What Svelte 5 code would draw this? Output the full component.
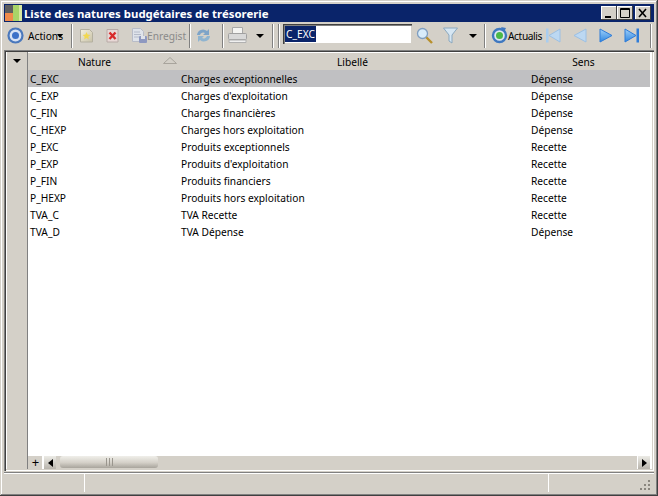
<script>
  var rows = [
    ['C_EXC', 'Charges exceptionnelles', 'Dépense'],
    ['C_EXP', "Charges d'exploitation", 'Dépense'],
    ['C_FIN', 'Charges financières', 'Dépense'],
    ['C_HEXP', 'Charges hors exploitation', 'Dépense'],
    ['P_EXC', 'Produits exceptionnels', 'Recette'],
    ['P_EXP', "Produits d'exploitation", 'Recette'],
    ['P_FIN', 'Produits financiers', 'Recette'],
    ['P_HEXP', 'Produits hors exploitation', 'Recette'],
    ['TVA_C', 'TVA Recette', 'Recette'],
    ['TVA_D', 'TVA Dépense', 'Dépense']
  ];
</script>

<div class="window">
  <div class="titlebar">
    <svg class="app-icon" width="20" height="18" viewBox="0 0 20 18">
      <rect x="1" y="1" width="8" height="8" fill="#5e5e5e"/>
      <rect x="9" y="1" width="9" height="16" fill="#a8d468"/>
      <rect x="1" y="9" width="8" height="8" fill="#f08a4a"/>
      <rect x="15" y="1" width="3" height="16" fill="#d8e8a0"/>
    </svg>
    <span class="title">Liste des natures budgétaires de trésorerie</span>
    <div class="win-btns">
      <button class="win-btn" aria-label="min"><svg width="16" height="14"><rect x="4" y="10" width="6" height="2" fill="#000"/></svg></button>
      <button class="win-btn" aria-label="max"><svg width="16" height="14"><path d="M3.500 2.500h9v9h-9z M3 3.500h10" fill="none" stroke="#000"/></svg></button>
      <button class="win-btn close" aria-label="close"><svg width="16" height="14"><path d="M4 3l7 8M11 3l-7 8" stroke="#000" stroke-width="1.600"/></svg></button>
    </div>
  </div>

  <div class="toolbar">
    <svg class="ic ic-actions" width="17" height="17" viewBox="0 0 17 17">
      <circle cx="8.500" cy="8.500" r="7" fill="#d8e2f4" stroke="#4a78bc" stroke-width="2.200"/>
      <circle cx="8.500" cy="8.500" r="3.500" fill="#3c70c8"/>
    </svg>
    <span class="lbl lbl-actions">Actions</span>
    <svg class="mini" width="6" height="4"><path d="M0 0h6L3 4z" fill="#000"/></svg>
    <i class="sep sep-a"></i>

    <svg class="ic ic-new" width="15" height="15" viewBox="0 0 15 15">
      <defs><linearGradient id="dc" x1="0" y1="0" x2="1" y2="1"><stop offset="0" stop-color="#f4f0e0"/><stop offset="1" stop-color="#c8c2a8"/></linearGradient></defs>
      <path d="M1.500 1.500h9l3 3v9.500h-12z" fill="url(#dc)" stroke="#b4b0a0"/>
      <path d="M7.500 4l1.100 2.600 2.800.3-2.100 1.900.6 2.800-2.400-1.500-2.400 1.500.6-2.800-2.100-1.900 2.800-.3z" fill="#f2d84e"/>
    </svg>
    <svg class="ic ic-del" width="15" height="15" viewBox="0 0 15 15">
      <path d="M2 1.500h11v12.500H2z" fill="#e8d8d6" stroke="#b8aaa6"/>
      <path d="M4.500 4.500l6 6.500M10.500 4.500l-6 6.500" stroke="#d82a2a" stroke-width="2.400"/>
    </svg>
    <svg class="ic ic-save" width="17" height="17" viewBox="0 0 17 17">
      <path d="M1.500 1.500h8l3 3v10h-11z" fill="#dfe3ea" stroke="#b8bcc8"/>
      <path d="M3 5h6M3 7.500h7M3 10h5" stroke="#b4bac8"/>
      <rect x="8" y="9" width="8" height="7" rx="1" fill="#8e98c0"/>
      <rect x="10" y="9" width="4" height="3" fill="#dfe3ea"/>
    </svg>
    <span class="lbl lbl-save">Enregist</span>
    <i class="sep sep-b"></i>

    <svg class="ic ic-sync" width="17" height="17" viewBox="0 0 17 17">
      <path d="M2 8a6 6 0 0 1 10-4l2-2v6H8l2-2a3.500 3.500 0 0 0-5 2z" fill="#7ea4c8"/>
      <path d="M15 9a6 6 0 0 1-10 4l-2 2V9h6l-2 2a3.500 3.500 0 0 0 5-2z" fill="#8fb4d0"/>
    </svg>
    <i class="sep sep-c"></i>

    <svg class="ic ic-print" width="19" height="17" viewBox="0 0 19 17">
      <path d="M4.500.5h10v6h-10z" fill="#f4f4f2" stroke="#a8a8a8"/>
      <rect x=".5" y="6.500" width="18" height="6" rx="1" fill="#d8d8d8" stroke="#a0a0a0"/>
      <path d="M1 13h17v2.500H1z" fill="#f0f0f0" stroke="#b0b0b0"/>
    </svg>
    <svg class="arrow arrow-print" width="8" height="4"><path d="M0 0h8L4 4z" fill="#000"/></svg>
    <i class="sep sep-d"></i>
    <i class="sep sep-e"></i>

    <div class="search"><span class="sel">C_EXC</span></div>

    <svg class="ic ic-glass" width="17" height="17" viewBox="0 0 17 17">
      <path d="M10 10l6 6" stroke="#b8902c" stroke-width="2.400"/>
      <circle cx="6.500" cy="6.500" r="5" fill="#d8ecfa" stroke="#7f9ec0" stroke-width="1.300"/>
    </svg>
    <svg class="ic ic-funnel" width="15" height="17" viewBox="0 0 15 17">
      <path d="M.5 1h14L9 8v8l-3-2V8z" fill="#d6e6f2" stroke="#8aa8c0"/>
    </svg>
    <svg class="arrow arrow-filter" width="8" height="4"><path d="M0 0h8L4 4z" fill="#000"/></svg>
    <i class="sep sep-f"></i>

    <svg class="ic ic-refresh" width="17" height="17" viewBox="0 0 17 17">
      <circle cx="8.500" cy="8.500" r="6.500" fill="#dfe8f2" stroke="#3f78c0" stroke-width="2.400"/>
      <circle cx="8.500" cy="8.500" r="3.500" fill="#4cb848"/>
      <path d="M10 0l5 1-2 4z" fill="#3f78c0"/>
    </svg>
    <span class="lbl lbl-refresh">Actualis</span>

    <svg class="ic ic-first" width="16" height="15" viewBox="0 0 16 15">
      <path d="M1 .5h2.500v14H1z" fill="#a8cdf0"/>
      <path d="M15 1v13L4 7.500z" fill="#bcd8f2" stroke="#9cc0e4"/>
    </svg>
    <svg class="ic ic-prev" width="14" height="15" viewBox="0 0 14 15">
      <path d="M13 1v13L1 7.500z" fill="#bcd8f2" stroke="#9cc0e4"/>
    </svg>
    <svg class="ic ic-next" width="14" height="15" viewBox="0 0 14 15">
      <defs><linearGradient id="nx" x1="0" y1="0" x2="0" y2="1"><stop offset="0" stop-color="#9fd0fa"/><stop offset="1" stop-color="#2f86e0"/></linearGradient></defs>
      <path d="M1 1v13l12-6.500z" fill="url(#nx)" stroke="#2f7cd8"/>
    </svg>
    <svg class="ic ic-last" width="16" height="15" viewBox="0 0 16 15">
      <path d="M1 1v13l11-6.500z" fill="url(#nx)" stroke="#2f7cd8"/>
      <path d="M12.500.5H15v14h-2.500z" fill="#2f7cd8"/>
    </svg>
    <i class="sep sep-g"></i>
  </div>

  <div class="grid">
    <div class="gutter">
      <div class="gutter-head"><svg width="8" height="4"><path d="M0 0h8L4 4z" fill="#000"/></svg></div>
    </div>
    <div class="main">
      <div class="head">
        <div class="hc c1">Nature
          <svg class="sort" width="14" height="7"><path d="M.5 6.500h13L7 .5z" fill="none" stroke="#a8a49c"/></svg>
        </div>
        <div class="hc c2">Libellé</div>
        <div class="hc c3">Sens</div>
      </div>
      <div class="body">
        {#each rows as r, i}
          <div class="row" class:selected={i === 0}>
            <span class="c1">{r[0]}</span>
            <span class="c2">{r[1]}</span>
            <span class="c3">{r[2]}</span>
          </div>
        {/each}
      </div>
      <div class="hscroll">
        <div class="plus">+</div>
        <div class="sb-btn"><svg width="5" height="8"><path d="M5 0v8L0 4z" fill="#000"/></svg></div>
        <div class="track">
          <div class="thumb"><i></i><i></i><i></i></div>
        </div>
        <div class="sb-btn"><svg width="5" height="8"><path d="M0 0v8l5-4z" fill="#000"/></svg></div>
      </div>
    </div>
  </div>

  <div class="status">
    <div class="cell cell1"></div>
    <div class="cell cell2"></div>
    <div class="cell cell3">
      <svg class="grip" width="12" height="12">
        <g fill="#8a867e">
          <rect x="9" y="1" width="2" height="2"/>
          <rect x="5" y="5" width="2" height="2"/><rect x="9" y="5" width="2" height="2"/>
          <rect x="1" y="9" width="2" height="2"/><rect x="5" y="9" width="2" height="2"/><rect x="9" y="9" width="2" height="2"/>
        </g>
      </svg>
    </div>
  </div>
</div>

<style>
  :global(body) {
    margin: 0;
    background: #d4d0c8;
  }

  .window {
    box-sizing: border-box;
    width: 658px;
    height: 496px;
    padding: 4px;
    background: #d4d0c8;
    box-shadow: inset -1px -1px 0 #404040, inset 1px 1px 0 #d4d0c8, inset -2px -2px 0 #808080, inset 2px 2px 0 #fff;
    display: flex;
    flex-direction: column;
    font-family: "Noto Sans", sans-serif;
    font-size: 10.2px;
    color: #000;
  }

  .titlebar {
    height: 18px;
    flex: none;
    background: #0a246a;
    display: flex;
    align-items: center;
  }

  .app-icon {
    flex: none;
  }

  .title {
    color: #fff;
    font-family: "Noto Sans", sans-serif;
    font-weight: bold;
    font-size: 11.4px;
    white-space: nowrap;
  }

  .win-btns {
    margin-left: auto;
    margin-right: 3px;
    display: flex;
  }

  .win-btn {
    width: 16px;
    height: 14px;
    padding: 0;
    border: none;
    background: #d4d0c8;
    box-shadow: inset -1px -1px 0 #404040, inset 1px 1px 0 #fff;
    display: block;
  }

  .win-btn svg {
    display: block;
  }

  .win-btn.close {
    margin-left: 2px;
  }

  .toolbar {
    height: 27px;
    flex: none;
    display: flex;
    align-items: center;
    white-space: nowrap;
  }

  .ic, .arrow, .mini {
    flex: none;
    display: block;
  }

  .lbl {
    flex: none;
  }

  .sep {
    flex: none;
    display: block;
    width: 1px;
    height: 24px;
    background: #808080;
    box-shadow: 1px 0 0 #fff;
  }

  .ic-actions { margin-left: 3px; }
  .lbl-actions { margin-left: 4px; width: 29px; }
  .sep-a { margin-left: 8px; }
  .ic-new { margin-left: 7px; }
  .ic-del { margin-left: 11px; }
  .ic-save { margin-left: 11px; }
  .lbl-save { margin-left: -1px; width: 37px; color: #8a8a8a; }
  .sep-b { margin-left: 5px; }
  .ic-sync { margin-left: 5px; }
  .sep-c { margin-left: 10px; }
  .ic-print { margin-left: 5px; }
  .arrow-print { margin-left: 9px; }
  .sep-d { margin-left: 8px; }
  .sep-e { margin-left: 5px; }

  .search {
    flex: none;
    box-sizing: border-box;
    width: 129px;
    height: 20px;
    margin: -3px 0 0 4px;
    padding: 2px;
    background: #fff;
    box-shadow: inset 1px 1px 0 #404040, inset 2px 2px 0 #808080, inset -1px -1px 0 #d4d0c8;
  }

  .sel {
    display: inline-block;
    padding: 0 1px;
    background: #0a246a;
    color: #fff;
    line-height: 16px;
  }

  .ic-glass { margin-left: 4px; }
  .ic-funnel { margin-left: 10px; }
  .arrow-filter { margin-left: 11px; }
  .sep-f { margin-left: 7px; }
  .ic-refresh { margin-left: 6px; }
  .lbl-refresh { width: 33px; letter-spacing: -0.4px; }
  .ic-first { margin-left: 4px; }
  .ic-prev { margin-left: 12px; }
  .ic-next { margin-left: 12px; }
  .ic-last { margin-left: 11px; }
  .sep-g { margin-left: 10px; }

  .grid {
    flex: 1;
    min-height: 0;
    display: flex;
    margin-top: 1px;
    background: #fff;
    box-shadow: inset 1px 1px 0 #808080, inset 2px 2px 0 #404040, inset -1px -1px 0 #fff, inset -2px -2px 0 #d4d0c8;
    padding: 3px 4px 2px 2px;
  }

  .gutter {
    flex: none;
    width: 21px;
    margin-top: -1px;
    background: #d4d0c8;
    border-right: 1px solid #808080;
    box-shadow: inset 1px 0 0 #fff;
  }

  .gutter-head {
    height: 18px;
    display: flex;
    align-items: center;
    justify-content: center;
  }

  .gutter-head svg {
    display: block;
  }

  .main {
    flex: 1;
    min-width: 0;
    display: flex;
    flex-direction: column;
  }

  .head {
    height: 17px;
    flex: none;
    display: flex;
    background: #d4d0c8;
    align-items: center;
  }

  .hc {
    text-align: center;
    box-sizing: border-box;
  }

  .hc.c1 {
    position: relative;
    padding-right: 18px;
  }

  .hc.c2 {
    padding-right: 3px;
  }

  .hc.c3 {
    padding-right: 12px;
  }

  .sort {
    position: absolute;
    right: 2px;
    top: 2px;
  }

  .c1 { width: 151px; flex: none; }
  .c2 { width: 350px; flex: none; }
  .c3 { width: 121px; flex: none; }

  .body {
    flex: 1;
  }

  .row {
    height: 17px;
    display: flex;
    align-items: center;
    white-space: nowrap;
  }

  .row span {
    box-sizing: border-box;
    padding-left: 2px;
  }

  .row.selected {
    background: #c0c0c2;
  }

  .hscroll {
    height: 13px;
    flex: none;
    display: flex;
    background: #d4d0c8;
  }

  .plus {
    width: 15px;
    flex: none;
    font-size: 13px;
    line-height: 13px;
    text-align: center;
    background: #d4d0c8;
    box-shadow: inset -1px 0 0 #fff;
  }

  .sb-btn {
    width: 12px;
    flex: none;
    display: flex;
    align-items: center;
    justify-content: center;
    background: linear-gradient(#ecebe6, #b8b4ac);
    border-left: 1px solid #fff;
  }

  .track {
    flex: 1;
    padding: 0 0 0 4px;
  }

  .thumb {
    box-sizing: border-box;
    width: 98px;
    height: 12px;
    border-radius: 3px;
    background: linear-gradient(#f0efea, #d4d0c8 55%, #a8a49c);
    display: flex;
    justify-content: center;
    gap: 2px;
    padding: 2px 0;
  }

  .thumb i {
    display: block;
    width: 1px;
    background: #9a968e;
  }

  .status {
    height: 20px;
    flex: none;
    box-sizing: border-box;
    display: flex;
    margin-top: 1px;
    border-top: 1px solid #808080;
    box-shadow: inset 0 1px 0 #fff;
  }

  .cell {
    box-sizing: border-box;
    border-right: 1px solid #fff;
  }

  .cell1 { width: 81px; flex: none; }
  .cell2 { width: 464px; flex: none; }

  .cell3 {
    flex: 1;
    border-right: none;
    display: flex;
    justify-content: flex-end;
    align-items: flex-end;
    padding: 0 3px 1px 0;
  }

  .grip {
    display: block;
  }
</style>
